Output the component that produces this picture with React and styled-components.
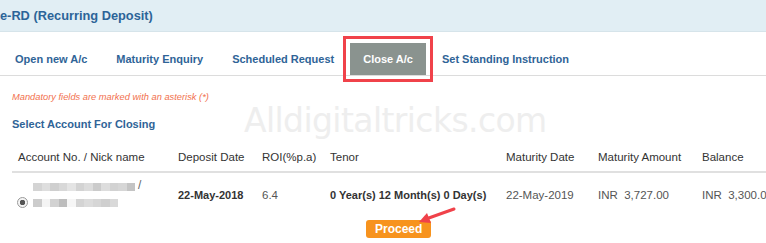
import React from 'react';
import styled, { createGlobalStyle } from 'styled-components';

const GlobalStyle = createGlobalStyle`
  html, body {
    margin: 0;
    padding: 0;
    background: #fff;
    font-family: "Liberation Sans", Arial, sans-serif;
    overflow: hidden;
  }
`;

const tabs = [
  'Open new A/c',
  'Maturity Enquiry',
  'Scheduled Request',
  'Close A/c',
  'Set Standing Instruction',
];

const columns = [
  { label: 'Account No. / Nick name', width: 160 },
  { label: 'Deposit Date', width: 84 },
  { label: 'ROI(%p.a)', width: 68 },
  { label: 'Tenor', width: 176 },
  { label: 'Maturity Date', width: 92 },
  { label: 'Maturity Amount', width: 104 },
  { label: 'Balance', width: 120 },
];

const gridTemplate = columns.map((c) => `${c.width}px`).join(' ');

// blurred account number blocks (grey shades)
const blurLine1 = ['#d4d4d4', '#dedede', '#cfcfcf', '#d8d8d8', '#e4e4e4', '#d3d3d3', '#dcdcdc', '#cbcbcb', '#dddddd', '#d2d2d2', '#d6d6d6', '#c4c4c4'];
const blurLine2 = ['#cccccc', '#f4f4f4', '#d2d2d2', '#bdbdbd', '#f6f6f6', '#d4d4d4', '#dcdcdc', '#d6d6d6', '#cfcfcf', '#d9d9d9'];

/* Page wrapper */
const Page = styled.div`
  position: relative;
  width: 766px;
  height: 243px;
  overflow: hidden;
`;

/* Light blue title band */
const TitleBar = styled.div`
  height: 31px;
  background: #e1eef4;
  display: flex;
  align-items: center;
  font-size: 12.8px;
  font-weight: bold;
  color: #2c6498;
  border-bottom: 1px solid #d6e4ea;
`;

/* Row of tabs */
const TabBar = styled.div`
  display: flex;
  align-items: flex-end;
  height: 43px;
  padding-left: 2px;
  border-bottom: 1px solid #dcdcdc;
`;

const Tab = styled.div`
  height: 32px;
  display: flex;
  align-items: center;
  padding: 0 13px;
  margin-right: 3px;
  font-size: 11px;
  font-weight: bold;
  color: ${(p) => (p.$active ? '#fff' : '#2f6497')};
  background: ${(p) => (p.$active ? '#8a938f' : 'transparent')};
  outline: ${(p) => (p.$active ? '3px solid #f0424a' : 'none')};
  outline-offset: 4px;
`;

const Content = styled.div`
  padding: 14px 0 0 12px;
`;

const Note = styled.div`
  font-size: 9.3px;
  font-style: italic;
  color: #f2714e;
  height: 14px;
  line-height: 14px;
`;

const SectionTitle = styled.div`
  margin-top: 12px;
  font-size: 11px;
  font-weight: bold;
  color: #2f6497;
  height: 16px;
  line-height: 16px;
`;

const Table = styled.div`
  margin-top: 10px;
`;

const HeaderRow = styled.div`
  display: grid;
  grid-template-columns: ${gridTemplate};
  height: 29px;
  align-items: center;
  border-bottom: 2px solid #e0e0e0;
  font-size: 11.5px;
  color: #333;
  white-space: nowrap;
`;

const HeaderCell = styled.div`
  padding-left: 6px;
`;

const BodyRow = styled.div`
  display: grid;
  grid-template-columns: ${gridTemplate};
  height: 44px;
  align-items: center;
  font-size: 11.5px;
  white-space: nowrap;
`;

const Cell = styled.div`
  padding-left: 6px;
  font-weight: ${(p) => (p.$bold ? 'bold' : 'normal')};
  font-size: ${(p) => (p.$bold ? '11px' : '11.5px')};
  color: ${(p) => (p.$bold ? '#333' : '#555')};
`;

const AccountCell = styled.div`
  display: flex;
  align-items: center;
  padding-left: 5px;
  gap: 5px;
`;

const Radio = styled.span`
  width: 9px;
  height: 9px;
  border-radius: 50%;
  border: 1px solid #9a9a9a;
  background: radial-gradient(circle, #555 0 2.5px, #f4f4f4 3px);
  margin-top: 14px;
  flex-shrink: 0;
`;

const AccountText = styled.div`
  display: flex;
  flex-direction: column;
  gap: 6px;
`;

const BlurLine = styled.div`
  display: flex;
  align-items: center;
  height: 10px;
  color: #666;
  font-size: 12px;
`;

const BlurBlock = styled.span`
  display: inline-block;
  width: 8.5px;
  height: 8px;
  background: ${(p) => p.$c};
`;

const Slash = styled.span`
  margin-left: 3px;
  margin-top: -4px;
`;

const Actions = styled.div`
  display: flex;
  padding-left: 354px;
  margin-top: 3px;
`;

const ProceedButton = styled.button`
  height: 18px;
  padding: 0 9px;
  border: none;
  border-radius: 3px;
  background: #f7931e;
  color: #fff;
  font-family: "Liberation Sans", Arial, sans-serif;
  font-size: 12px;
  font-weight: bold;
  cursor: pointer;
`;

/* Watermark overlay */
const Watermark = styled.div`
  position: absolute;
  left: 244px;
  top: 101px;
  font-family: "DejaVu Sans", sans-serif;
  font-size: 33px;
  letter-spacing: -0.6px;
  color: #eeeeee;
  pointer-events: none;
`;

/* Red annotation arrow */
const Arrow = styled.svg`
  position: absolute;
  left: 412px;
  top: 204px;
`;

export default function App() {
  return (
    <>
      <GlobalStyle />
      <Page>
        <TitleBar>e-RD (Recurring Deposit)</TitleBar>
        <TabBar>
          {tabs.map((t) => (
            <Tab key={t} $active={t === 'Close A/c'}>
              {t}
            </Tab>
          ))}
        </TabBar>
        <Content>
          <Note>Mandatory fields are marked with an asterisk (*)</Note>
          <SectionTitle>Select Account For Closing</SectionTitle>
          <Table>
            <HeaderRow>
              {columns.map((c) => (
                <HeaderCell key={c.label}>{c.label}</HeaderCell>
              ))}
            </HeaderRow>
            <BodyRow>
              <AccountCell>
                <Radio />
                <AccountText>
                  <BlurLine>
                    {blurLine1.map((c, i) => (
                      <BlurBlock key={i} $c={c} />
                    ))}
                    <Slash>/</Slash>
                  </BlurLine>
                  <BlurLine>
                    {blurLine2.map((c, i) => (
                      <BlurBlock key={i} $c={c} />
                    ))}
                  </BlurLine>
                </AccountText>
              </AccountCell>
              <Cell $bold>22-May-2018</Cell>
              <Cell>6.4</Cell>
              <Cell $bold>0 Year(s) 12 Month(s) 0 Day(s)</Cell>
              <Cell>22-May-2019</Cell>
              <Cell>INR&nbsp; 3,727.00</Cell>
              <Cell>INR&nbsp; 3,300.00</Cell>
            </BodyRow>
          </Table>
          <Actions>
            <ProceedButton>Proceed</ProceedButton>
          </Actions>
        </Content>
        <Watermark>Alldigitaltricks.com</Watermark>
        <Arrow width="48" height="24" viewBox="0 0 48 24">
          <line x1="42" y1="5" x2="14" y2="15" stroke="#f0424a" strokeWidth="3" strokeLinecap="round" />
          <polygon points="7,18 15,9 19,19" fill="#f0424a" />
        </Arrow>
      </Page>
    </>
  );
}
